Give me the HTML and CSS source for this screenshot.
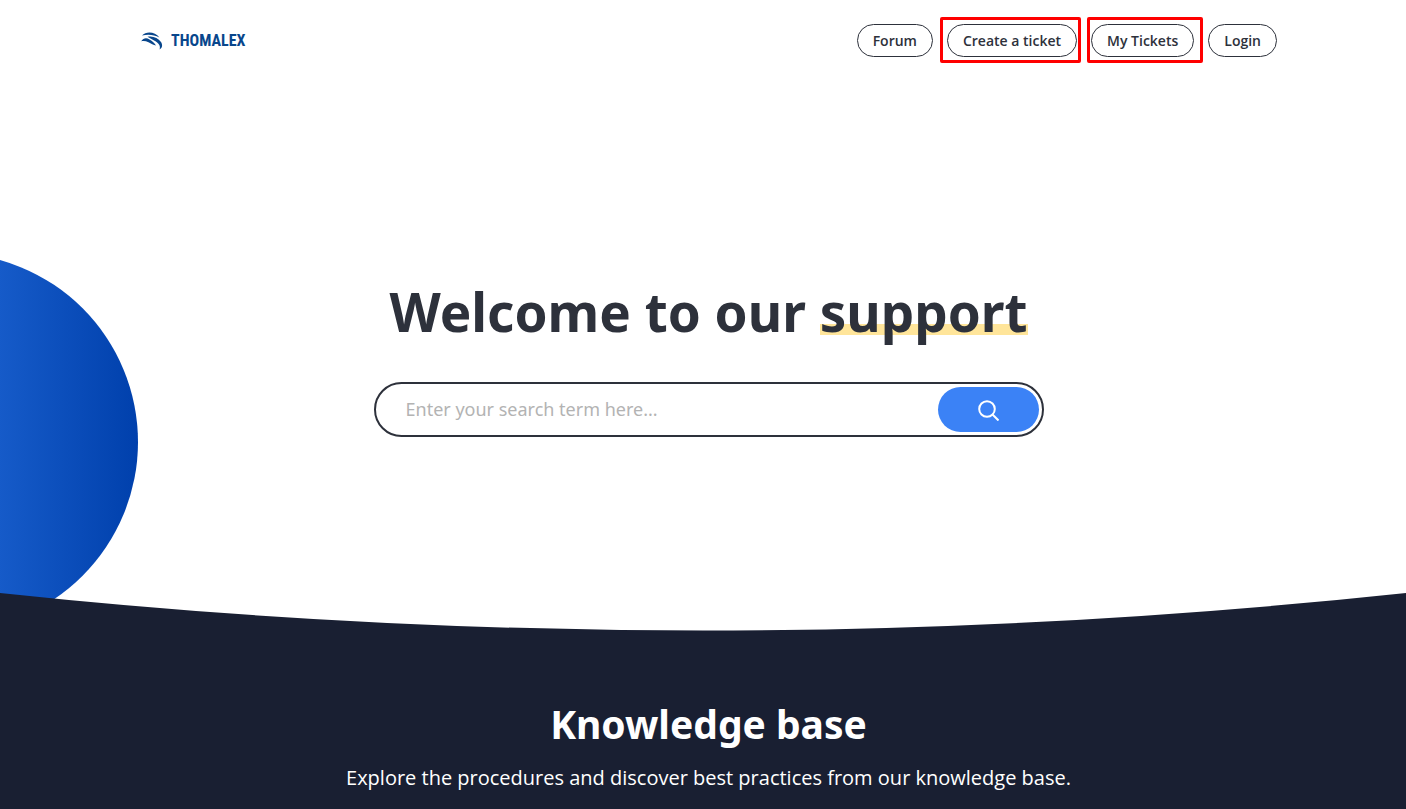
FILE: index.html
```
<!DOCTYPE html>
<html lang="en">
<head>
    <meta charset="UTF-8">
    <meta name="viewport" content="width=device-width, initial-scale=1.0">
    <title>Thomalex support</title>
    <link rel="stylesheet" href="styles.css">
</head>
<body>

    <header class="header">
        <a href="#" class="logo">
            <svg class="logo-icon" viewBox="0 0 22 18" aria-hidden="true">
                <path d="M1 3.500C5 -.8 14 -.5 18.400 5.500C13 2.600 7 2.200 1 3.500Z"/>
                <path d="M6.500 4.800C12 3.600 17 6 20 10C21.800 12.800 21.500 16 18.600 17.500C19.800 13.500 17.500 11 13.500 8.800C11 7.400 9 6.200 6.500 4.800Z"/>
                <path d="M.2 9.300C2.200 6 5.500 5.600 8.500 7.400C11.500 9.200 13.500 10.800 15 13.600C12.500 13 10 11.400 7.500 10.200C5 9 2.500 8.500 .2 9.300Z"/>
            </svg>
            <span class="logo-text">THOMALEX</span>
        </a>
        <nav class="nav">
            <a href="#" class="nav-link">Forum</a>
            <a href="#" class="nav-link marked marked-create">Create a ticket</a>
            <a href="#" class="nav-link marked marked-tickets">My Tickets</a>
            <a href="#" class="nav-link">Login</a>
        </nav>
    </header>

    <main>
        <section class="hero">
            <div class="circle"></div>
            <h1>Welcome to our <span class="highlight">support</span></h1>
            <form class="search">
                <input type="text" aria-label="Search" placeholder="Enter your search term here...">
                <button type="button" aria-label="Submit search">
                    <svg viewBox="0 0 22 22" aria-hidden="true">
                        <circle cx="10" cy="10" r="7.800"/>
                        <path d="M15.500 15.500L21.500 21.500"/>
                    </svg>
                </button>
            </form>
        </section>

        <section class="knowledge">
            <svg class="wave" viewBox="0 0 1416 38" preserveAspectRatio="none" aria-hidden="true">
                <path d="M0 0Q708 75 1416 0V38H0Z"/>
            </svg>
            <div class="knowledge-body">
                <h2>Knowledge base</h2>
                <p>Explore the procedures and discover best practices from our knowledge base.</p>
            </div>
        </section>
    </main>

</body>
</html>
```
FILE: styles.css
```
* {
    box-sizing: border-box;
}

body {
    margin: 0;
    min-height: 100vh;
    display: flex;
    flex-direction: column;
    overflow: hidden;
    font-family: "Noto Sans", "Open Sans", sans-serif;
    color: #2d313b;
    background-color: #fff;
}

main {
    flex: 1;
    display: flex;
    flex-direction: column;
}

.header {
    display: flex;
    align-items: center;
    justify-content: space-between;
    padding: 24px 129px 24px 141px;
}

.logo {
    display: flex;
    align-items: center;
    gap: 8px;
    color: #08468c;
    text-decoration: none;
}

.logo-icon {
    width: 22px;
    height: 18px;
    fill: #08468c;
}

.logo-text {
    font-family: "Liberation Sans Narrow", "Roboto Condensed", "Liberation Sans", sans-serif;
    font-size: 16px;
    font-weight: bold;
    line-height: 20px;
}

.nav {
    display: flex;
    gap: 14px;
}

.nav-link {
    position: relative;
    padding: 0 15px;
    border: 1px solid #2d313b;
    border-radius: 17px;
    font-family: "Open Sans", sans-serif;
    font-size: 14px;
    font-weight: 600;
    line-height: 31px;
    color: #2d313b;
    text-decoration: none;
}

/* red frames around the ticket links */
.marked::after {
    content: "";
    position: absolute;
    top: -8px;
    bottom: -7px;
    border: 3px solid #f00;
    border-radius: 2px;
}

.marked-create::after {
    left: -8px;
    right: -5px;
}

.marked-tickets::after {
    left: -5px;
    right: -10px;
}

.hero {
    position: relative;
    padding: 195px 0 156px 11px;
    text-align: center;
}

.circle {
    position: absolute;
    top: 172px;
    left: -240px;
    width: 378px;
    height: 378px;
    border-radius: 50%;
    background: linear-gradient(90deg, #3b82f6, #165bc9 63%, #0040ac);
}

h1 {
    position: relative;
    margin: 0 0 34px;
    font-size: 53px;
    font-weight: bold;
    line-height: 72px;
}

.highlight {
    background: linear-gradient(transparent 67%, #ffe59a 67%, #ffe59a 82%, transparent 82%);
}

.search {
    display: flex;
    max-width: 670px;
    height: 55px;
    margin: 0 auto;
    padding: 3px;
    border: 2px solid #2d313b;
    border-radius: 28px;
    background-color: #fff;
}

.search input {
    flex: 1;
    min-width: 0;
    padding: 0 27px 2px;
    border: none;
    outline: none;
    background: none;
    font-family: inherit;
    font-size: 18px;
    color: #2d313b;
}

.search input::placeholder {
    color: #b3b3b3;
}

.search button {
    display: flex;
    align-items: center;
    justify-content: center;
    width: 101px;
    border: none;
    border-radius: 23px;
    background-color: #3b82f6;
    cursor: pointer;
}

.search button svg {
    width: 22px;
    height: 22px;
    fill: none;
    stroke: #fff;
    stroke-width: 2;
}

.knowledge {
    position: relative;
    flex: 1;
    color: #fff;
    text-align: center;
    display: flex;
    flex-direction: column;
}

.wave {
    display: block;
    width: 100%;
    height: 38px;
    fill: #191f32;
}

.knowledge-body {
    flex: 1;
    padding: 66px 0 12px 11px;
    background-color: #191f32;
}

h2 {
    margin: 0 0 13px;
    font-size: 39px;
    font-weight: bold;
    line-height: 54px;
}

.knowledge-body p {
    margin: 0;
    font-family: "Open Sans", sans-serif;
    font-size: 20px;
    line-height: 28px;
}
```
